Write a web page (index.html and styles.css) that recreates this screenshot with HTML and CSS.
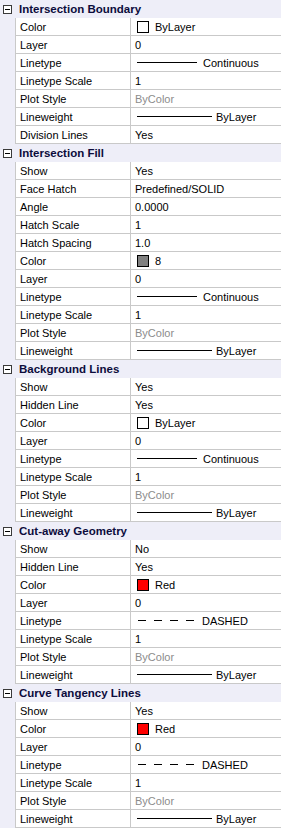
FILE: index.html
```html
<!DOCTYPE html>
<html>
<head>
<meta charset="utf-8">
<link rel="stylesheet" href="styles.css">
</head>
<body>
<div class="grid" id="grid"></div>
<script src="app.js"></script>
</body>
</html>
```
FILE: styles.css
```css
html, body { margin: 0; padding: 0; background: #fff; }
body { font-family: "Liberation Sans", Arial, sans-serif; font-size: 11px; color: #000; width: 281px; overflow: hidden; }
.grid { display: flex; flex-direction: column; background: #eeeef8; }
.head { display: flex; height: 18px; align-items: center; background: #eeeef8; }
.toggle { width: 15px; display: flex; justify-content: center; }
.toggle .box { width: 9px; height: 9px; border: 1px solid #3a3a3a; box-sizing: border-box; position: relative; background: #fff; }
.toggle .box::after { content: ""; position: absolute; left: 1px; right: 1px; top: 3px; height: 1px; background: #000; }
.head .title { font-weight: bold; color: #0c0c3c; padding-left: 4px; font-size: 11.5px; }
.row { display: flex; height: 18px; margin-left: 15px; background: #fff; border-left: 1px solid #c9c9c9; box-sizing: border-box; }
.row > div { border-bottom: 1px solid #c9c9c9; box-sizing: border-box; display: flex; align-items: center; height: 18px; }
.name { width: 115px; flex: none; padding-left: 4px; border-right: 1px solid #c9c9c9; color: #000; }
.val { flex: 1; padding-left: 4px; color: #000; }
.val.dim { color: #8c8c8c; }
.swatch { width: 12px; height: 12px; border: 1px solid #000; box-sizing: border-box; margin: 0 6px 0 2px; }
.line { height: 1px; background: #000; margin: 0 6px 0 2px; }
.line.w { margin-right: 4px; }
.dash { display: flex; gap: 8px; margin: 0 8px 0 3px; }
.dash span { width: 8px; height: 1px; background: #000; }
```
FILE: app.js
```js
const data = [
  ["Intersection Boundary", [
    ["Color", {sw:"#fff", t:"ByLayer"}],
    ["Layer", "0"],
    ["Linetype", {lt:60, t:"Continuous"}],
    ["Linetype Scale", "1"],
    ["Plot Style", {dim:"ByColor"}],
    ["Lineweight", {lw:75, t:"ByLayer"}],
    ["Division Lines", "Yes"]]],
  ["Intersection Fill", [
    ["Show", "Yes"],
    ["Face Hatch", "Predefined/SOLID"],
    ["Angle", "0.0000"],
    ["Hatch Scale", "1"],
    ["Hatch Spacing", "1.0"],
    ["Color", {sw:"#808080", t:"8"}],
    ["Layer", "0"],
    ["Linetype", {lt:60, t:"Continuous"}],
    ["Linetype Scale", "1"],
    ["Plot Style", {dim:"ByColor"}],
    ["Lineweight", {lw:75, t:"ByLayer"}]]],
  ["Background Lines", [
    ["Show", "Yes"],
    ["Hidden Line", "Yes"],
    ["Color", {sw:"#fff", t:"ByLayer"}],
    ["Layer", "0"],
    ["Linetype", {lt:60, t:"Continuous"}],
    ["Linetype Scale", "1"],
    ["Plot Style", {dim:"ByColor"}],
    ["Lineweight", {lw:75, t:"ByLayer"}]]],
  ["Cut-away Geometry", [
    ["Show", "No"],
    ["Hidden Line", "Yes"],
    ["Color", {sw:"#ff0000", t:"Red"}],
    ["Layer", "0"],
    ["Linetype", {da:4, t:"DASHED"}],
    ["Linetype Scale", "1"],
    ["Plot Style", {dim:"ByColor"}],
    ["Lineweight", {lw:75, t:"ByLayer"}]]],
  ["Curve Tangency Lines", [
    ["Show", "Yes"],
    ["Color", {sw:"#ff0000", t:"Red"}],
    ["Layer", "0"],
    ["Linetype", {da:4, t:"DASHED"}],
    ["Linetype Scale", "1"],
    ["Plot Style", {dim:"ByColor"}],
    ["Lineweight", {lw:75, t:"ByLayer"}]]]
];
const grid = document.getElementById('grid');
for (const [title, rows] of data) {
  const h = document.createElement('div');
  h.className = 'head';
  h.innerHTML = '<div class="toggle"><div class="box"></div></div><div class="title"></div>';
  h.querySelector('.title').textContent = title;
  grid.appendChild(h);
  for (const [name, v] of rows) {
    const r = document.createElement('div');
    r.className = 'row';
    const n = document.createElement('div');
    n.className = 'name'; n.textContent = name;
    const val = document.createElement('div');
    val.className = 'val';
    if (typeof v === 'string') val.textContent = v;
    else if (v.dim) { val.classList.add('dim'); val.textContent = v.dim; }
    else {
      if (v.sw) { const s = document.createElement('span'); s.className = 'swatch'; s.style.background = v.sw; val.appendChild(s); }
      if (v.lt) { const s = document.createElement('span'); s.className = 'line'; s.style.width = v.lt + 'px'; val.appendChild(s); }
      if (v.lw) { const s = document.createElement('span'); s.className = 'line w'; s.style.width = v.lw + 'px'; val.appendChild(s); }
      if (v.da) { const d = document.createElement('span'); d.className = 'dash'; for (let i = 0; i < v.da; i++) d.appendChild(document.createElement('span')); val.appendChild(d); }
      val.appendChild(document.createTextNode(v.t));
    }
    r.appendChild(n); r.appendChild(val);
    grid.appendChild(r);
  }
}
```
